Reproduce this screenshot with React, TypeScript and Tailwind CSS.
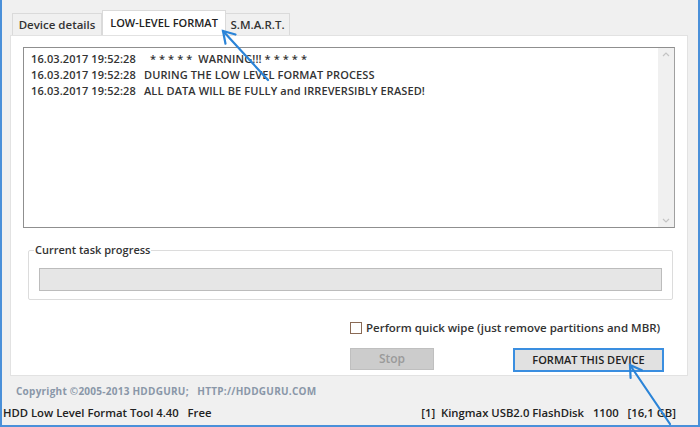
import React from 'react'

const font = {fontFamily: '"Open Sans", "Noto Sans", sans-serif'}

const logLines = [
  ['16.03.2017 19:52:28', '  * * * * *  WARNING!!! * * * * *'],
  ['16.03.2017 19:52:28', 'DURING THE LOW LEVEL FORMAT PROCESS'],
  ['16.03.2017 19:52:28', 'ALL DATA WILL BE FULLY and IRREVERSIBLY ERASED!']
]

const Arrow: React.FC<{x1: number; y1: number; x2: number; y2: number}> = ({
  x1,
  y1,
  x2,
  y2
}) => {
  const a = Math.atan2(y1 - y2, x1 - x2)
  const len = 13
  const spread = 0.55
  const p1 = [x2 + len * Math.cos(a + spread), y2 + len * Math.sin(a + spread)]
  const p2 = [x2 + len * Math.cos(a - spread), y2 + len * Math.sin(a - spread)]
  return (
    <g stroke="#2b84d8" strokeWidth="2.2" strokeLinecap="round" fill="none">
      <line x1={x1} y1={y1} x2={x2} y2={y2} />
      <polyline points={`${p1[0]},${p1[1]} ${x2},${y2} ${p2[0]},${p2[1]}`} />
    </g>
  )
}

export default function App() {
  return (
    <div
      className="relative w-[700px] h-[427px] bg-[#f0f0f0] border-x-2 border-b-2 border-[#4a90d9] text-[#1e1e1e] overflow-hidden"
      style={font}
    >
      {/* tabs */}
      <div className="flex items-end pl-[10px] pt-[10px] h-[35px]">
        <div className="w-[90px] h-[22px] flex items-center justify-center bg-[#f0f0f0] border border-b-0 border-[#dadada] text-[11.5px] font-semibold text-[#333]">
          Device details
        </div>
        <div className="w-[124px] h-[25px] flex items-center justify-center bg-white border border-b-0 border-[#dadada] text-[11px] font-semibold text-[#222]">
          LOW-LEVEL FORMAT
        </div>
        <div className="w-[64px] h-[22px] flex items-center justify-center bg-[#f0f0f0] border border-b-0 border-l-0 border-[#dadada] text-[11.5px] font-semibold text-[#333]">
          S.M.A.R.T.
        </div>
      </div>

      {/* panel */}
      <div className="ml-[8px] w-[678px] h-[341px] bg-white border border-[#e2e2e2] pt-[11px] px-[12px]">
        <div className="flex h-[181px] border border-[#8f8f8f] border-r-[#a0a0a0]">
          <div className="flex-1 pt-[3px] pl-[7px] text-[11px] font-semibold text-[#333] leading-[16px]">
            {logLines.map(([t, m], i) => (
              <div key={i} className="flex whitespace-pre tracking-[0.1px]">
                <span className="w-[113px]">{t}</span>
                <span>{m}</span>
              </div>
            ))}
          </div>
          <div className="w-[16px] bg-[#f0f0f0] flex flex-col justify-between items-center py-[4px]">
            <svg width="8" height="5" viewBox="0 0 8 5">
              <polyline points="1,4 4,1 7,4" stroke="#c4c4c4" fill="none" strokeWidth="1.2" />
            </svg>
            <svg width="8" height="5" viewBox="0 0 8 5">
              <polyline points="1,1 4,4 7,1" stroke="#c4c4c4" fill="none" strokeWidth="1.2" />
            </svg>
          </div>
        </div>

        {/* progress group */}
        <div className="relative mt-[22px] ml-[5px] w-[645px] h-[50px] border border-[#dcdcdc] rounded-[2px] px-[10px] pt-[17px]">
          <span className="absolute -top-[9px] left-[5px] bg-white px-[1px] text-[11px] font-semibold text-[#333] leading-[16px]">
            Current task progress
          </span>
          <div className="h-[23px] bg-[#e6e6e6] border border-[#bcbcbc]" />
        </div>

        <div className="flex items-center mt-[19px] ml-[327px] gap-[4px] text-[11.5px] font-semibold text-[#333]">
          <div className="w-[12px] h-[12px] border border-[#8a6a55] bg-white" />
          <span>Perform quick wipe (just remove partitions and MBR)</span>
        </div>

        <div className="flex mt-[12px] ml-[327px] gap-[79px]">
          <div className="w-[84px] h-[22px] bg-[#cccccc] border border-[#bfbfbf] flex items-center justify-center text-[12px] font-semibold text-[#9a9a9a]">
            Stop
          </div>
          <div className="w-[151px] h-[24px] bg-[#e1e1e1] border-2 border-[#3a8ee0] flex items-center justify-center text-[11px] font-semibold text-[#222]">
            FORMAT THIS DEVICE
          </div>
        </div>
      </div>

      <div className="pl-[14px] pt-[8px] h-[26px] text-[10px] font-bold text-[#8a97a8] tracking-[0.25px]">
        Copyright ©2005-2013 HDDGURU;&nbsp;&nbsp; HTTP://HDDGURU.COM
      </div>

      {/* status bar */}
      <div className="flex items-center justify-between h-[23px] pl-[1px] pr-[22px] text-[11.3px] font-semibold text-[#222] whitespace-pre">
        <span>HDD Low Level Format Tool 4.40   Free</span>
        <span>[1]  Kingmax USB2.0 FlashDisk   1100   [16,1 GB]</span>
      </div>

      <svg className="absolute inset-0 pointer-events-none" width="700" height="427">
        <Arrow x1={266} y1={80} x2={221} y2={31} />
        <Arrow x1={668} y1={424} x2={628} y2={365} />
      </svg>
    </div>
  )
}
